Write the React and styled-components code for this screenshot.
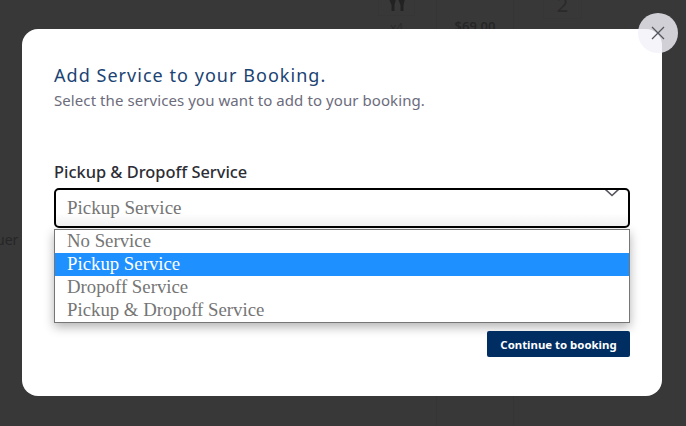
import React from "react";
import styled, { createGlobalStyle } from "styled-components";

const GlobalStyle = createGlobalStyle`
  html, body { margin: 0; padding: 0; }
  body { font-family: "Noto Sans", sans-serif; background: #383838; }
`;

const Page = styled.div`
  position: relative;
  width: 686px;
  height: 426px;
  overflow: hidden;
  background: #383838;
`;

const BackRow = styled.div`
  display: grid;
  grid-template-columns: 378px 58px 77px 30px 39px;
  height: 426px;
  color: #262626;
`;

const BackCell = styled.div`
  display: flex;
  flex-direction: column;
  align-items: ${p => (p.$start ? "flex-start" : "center")};
  box-sizing: border-box;
  border-left: ${p => (p.$line ? "1px solid #353535" : "none")};
`;

const BackBox = styled.div`
  display: flex;
  align-items: flex-end;
  justify-content: center;
  width: ${p => p.$width}px;
  height: ${p => p.$height}px;
  box-sizing: border-box;
  border: 1px solid #363636;
  border-top: none;
  overflow: hidden;
`;

const BackIcon = styled.svg`
  margin-bottom: 4px;
`;

const BackNumber = styled.span`
  font-size: 20px;
  line-height: 24px;
  margin-bottom: 1px;
  color: #2a2a2a;
`;

const BackPrice = styled.div`
  font-size: 13px;
  font-weight: 600;
  line-height: 16px;
  margin-top: 18px;
`;

const BackCount = styled.div`
  width: 37px;
  margin-top: 5px;
  font-size: 12px;
  line-height: 14px;
  text-align: center;
  color: #2c2c2c;
`;

const BackWord = styled.div`
  margin: 232px 0 0 -4px;
  font-size: 14px;
  line-height: 16px;
  color: #262626;
`;

const Overlay = styled.div`
  position: absolute;
  inset: 0;
  padding: 29px 24px 30px 22px;
  box-sizing: border-box;
`;

const Modal = styled.div`
  position: relative;
  display: flex;
  flex-direction: column;
  width: 640px;
  height: 367px;
  padding: 33px 32px 0;
  box-sizing: border-box;
  background: #fff;
  border-radius: 16px;
`;

const CloseButton = styled.button`
  position: absolute;
  top: -16px;
  right: -16px;
  display: flex;
  align-items: center;
  justify-content: center;
  width: 40px;
  height: 40px;
  padding: 0;
  border: none;
  border-radius: 50%;
  background: rgba(241, 242, 249, 0.82);
`;

const Title = styled.h2`
  margin: 0;
  font-size: 18px;
  font-weight: 400;
  line-height: 26px;
  letter-spacing: 1.04px;
  color: #1b4373;
`;

const Subtitle = styled.p`
  margin: 2px 0 0;
  font-size: 15px;
  line-height: 21px;
  letter-spacing: 0.08px;
  color: #6c6c7c;
`;

const Label = styled.label`
  margin-top: 49px;
  font-size: 16.4px;
  font-weight: 500;
  line-height: 24px;
  color: #2c2c34;
`;

const SelectBox = styled.div`
  position: relative;
  height: 40px;
  margin-top: 4px;
  padding-left: 11px;
  box-sizing: border-box;
  overflow: hidden;
  border: 2px solid #000;
  border-radius: 5px;
  background: linear-gradient(#fff 65%, #f0f0f0);
  font-family: "Liberation Serif", serif;
  font-size: 19px;
  line-height: 35px;
  color: #757575;
`;

const Chevron = styled.svg`
  position: absolute;
  top: -2px;
  right: 8px;
`;

const OptionList = styled.ul`
  margin: 1px 0 0;
  padding: 0;
  list-style: none;
  border: 1px solid #767676;
  background: #fff;
  box-shadow: 0 4px 10px rgba(0, 0, 0, 0.3);
`;

const OptionItem = styled.li`
  height: 23px;
  padding-left: 12px;
  font-family: "Liberation Serif", serif;
  font-size: 18.8px;
  line-height: 22px;
  color: ${p => (p.$selected ? "#fff" : "#757575")};
  background: ${p => (p.$selected ? "#1e90ff" : "transparent")};
`;

const Footer = styled.div`
  display: flex;
  justify-content: flex-end;
  margin-top: 8px;
`;

const ContinueButton = styled.button`
  width: 143px;
  height: 26px;
  padding: 0;
  border: none;
  border-radius: 2px;
  background: #002e63;
  color: #fff;
  font-family: "Noto Sans", sans-serif;
  font-size: 11.4px;
  font-weight: 700;
`;

const options = ["No Service", "Pickup Service", "Dropoff Service", "Pickup & Dropoff Service"];

const App = () => (
  <Page>
    <GlobalStyle />
    <BackRow>
      <BackCell $start>
        <BackWord>uer</BackWord>
      </BackCell>
      <BackCell $start>
        <BackBox $width={37} $height={16}>
          <BackIcon width="16" height="12" viewBox="0 0 16 12" fill="#222">
            <path d="M0 0h7L5.500 6v6h-3V6zM9 0h7l-1.500 6v6h-3V6z" />
          </BackIcon>
        </BackBox>
        <BackCount>x4</BackCount>
      </BackCell>
      <BackCell $line>
        <BackPrice>$69.00</BackPrice>
      </BackCell>
      <BackCell $line />
      <BackCell>
        <BackBox $width={39} $height={19}>
          <BackNumber>2</BackNumber>
        </BackBox>
      </BackCell>
    </BackRow>
    <Overlay>
      <Modal>
        <CloseButton aria-label="Close">
          <svg width="14" height="14" viewBox="0 0 14 14" fill="none" stroke="#55555f" strokeWidth="1.3">
            <path d="M1 1l12 12M13 1L1 13" />
          </svg>
        </CloseButton>
        <Title>Add Service to your Booking.</Title>
        <Subtitle>Select the services you want to add to your booking.</Subtitle>
        <Label>Pickup &amp; Dropoff Service</Label>
        <SelectBox>
          Pickup Service
          <Chevron width="16" height="9" viewBox="0 0 16 9" fill="none" stroke="#55555f" strokeWidth="1.6">
            <path d="M1 1l7 6.500L15 1" />
          </Chevron>
        </SelectBox>
        <OptionList>
          {options.map(o => (
            <OptionItem key={o} $selected={o === "Pickup Service"}>
              {o}
            </OptionItem>
          ))}
        </OptionList>
        <Footer>
          <ContinueButton>Continue to booking</ContinueButton>
        </Footer>
      </Modal>
    </Overlay>
  </Page>
);

export default App;
